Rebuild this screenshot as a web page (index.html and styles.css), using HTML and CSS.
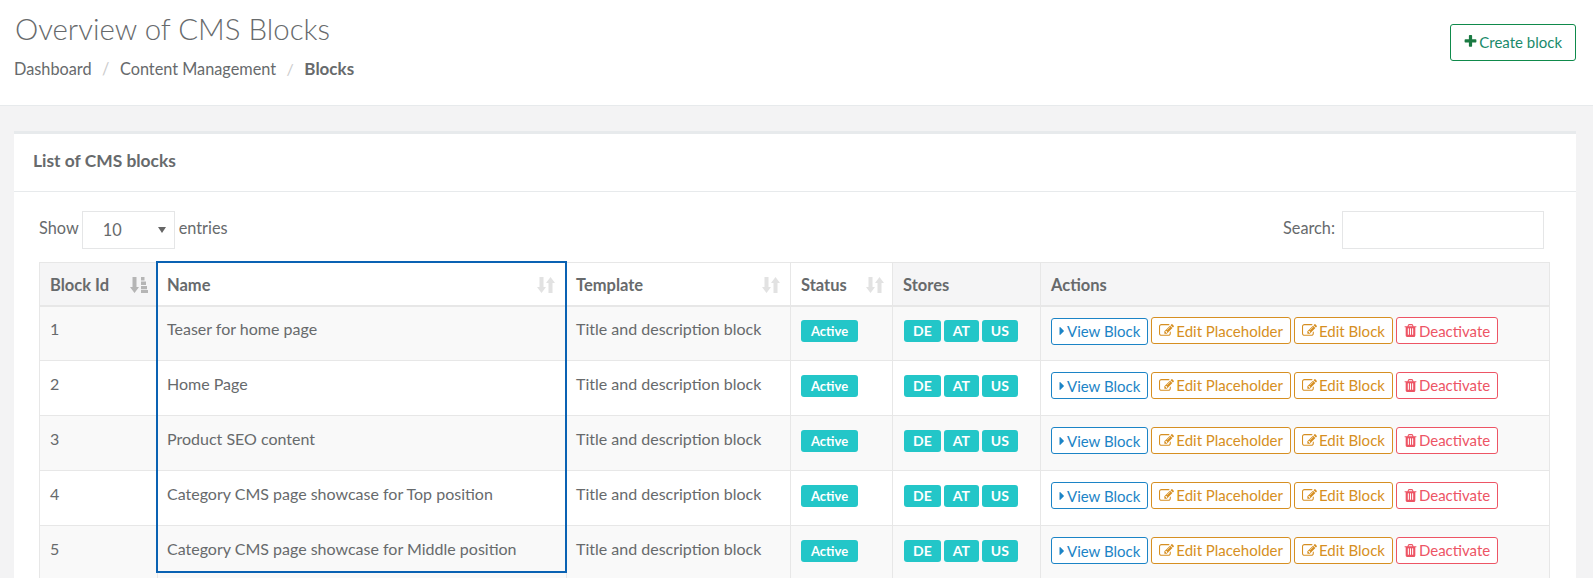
FILE: index.html
```html
<!DOCTYPE html>
<html lang="en">
<head>
    <meta charset="UTF-8">
    <title>Overview of CMS Blocks</title>
    <link rel="stylesheet" href="styles.css">
</head>
<body>
    <svg class="icon-defs" aria-hidden="true">
        <symbol id="i-plus" viewBox="0 0 1792 1792"><path d="M1600 736v192q0 40-28 68t-68 28h-416v416q0 40-28 68t-68 28h-192q-40 0-68-28t-28-68v-416h-416q-40 0-68-28t-28-68v-192q0-40 28-68t68-28h416v-416q0-40 28-68t68-28h192q40 0 68 28t28 68v416h416q40 0 68 28t28 68z"/></symbol>
        <symbol id="i-caret" viewBox="0 0 1792 1792"><path d="M1152 896q0 26-19 45l-448 448q-19 19-45 19t-45-19-19-45v-896q0-26 19-45t45-19 45 19l448 448q19 19 19 45z"/></symbol>
        <symbol id="i-edit" viewBox="0 0 1792 1792"><path d="M888 1184l116-116-152-152-116 116v56h96v96h56zm440-720q-16-16-33 1l-350 350q-17 17-1 33t33-1l350-350q17-17 1-33zm80 594v190q0 119-84.500 203.500t-203.500 84.500h-832q-119 0-203.500-84.500t-84.500-203.500v-832q0-119 84.500-203.500t203.500-84.500h832q63 0 117 25 15 7 18 23 3 17-9 29l-49 49q-14 14-32 8-23-6-45-6h-832q-66 0-113 47t-47 113v832q0 66 47 113t113 47h832q66 0 113-47t47-113v-126q0-13 9-22l64-64q15-15 35-7t20 29zm-96-738l288 288-672 672h-288v-288zm444 132l-92 92-288-288 92-92q28-28 68-28t68 28l152 152q28 28 28 68t-28 68z"/></symbol>
        <symbol id="i-trash" viewBox="0 0 1792 1792"><path d="M704 1376v-704q0-14-9-23t-23-9h-64q-14 0-23 9t-9 23v704q0 14 9 23t23 9h64q14 0 23-9t9-23zm256 0v-704q0-14-9-23t-23-9h-64q-14 0-23 9t-9 23v704q0 14 9 23t23 9h64q14 0 23-9t9-23zm256 0v-704q0-14-9-23t-23-9h-64q-14 0-23 9t-9 23v704q0 14 9 23t23 9h64q14 0 23-9t9-23zm-544-992h448l-48-117q-7-9-17-11h-317q-10 2-17 11zm928 32v64q0 14-9 23t-23 9h-96v948q0 83-47 143.500t-113 60.500h-832q-66 0-113-58.500t-47-141.500v-952h-96q-14 0-23-9t-9-23v-64q0-14 9-23t23-9h309l70-167q15-37 54-63t79-26h320q40 0 79 26t54 63l70 167h309q14 0 23 9t9 23z"/></symbol>
        <symbol id="i-sort" viewBox="0 0 18 18"><path d="M2.500 1h4v10H9l-4.500 6L0 11h2.500zM11.500 17h4V7H18l-4.500-6L9 7h2.500z"/></symbol>
        <symbol id="i-sort-asc" viewBox="0 0 18 18"><path d="M2.500 1h4v10H9l-4.500 6L0 11h2.500zM11 1h3.500v3.500H11zM11 5.500h5v3.500h-5zM11 10h6v3.200h-6zM11 14h7v3h-7z"/></symbol>
    </svg>

    <header class="page-head">
        <div>
            <h1>Overview of CMS Blocks</h1>
            <ol class="crumbs">
                <li>Dashboard</li>
                <li>Content Management</li>
                <li class="current">Blocks</li>
            </ol>
        </div>
        <a class="btn btn-create" href="#"><svg class="ico ico-plus"><use href="#i-plus"/></svg>Create block</a>
    </header>

    <main class="content">
        <section class="card">
            <h2 class="card-title">List of CMS blocks</h2>
            <div class="card-body">
                <div class="table-tools">
                    <label class="tool">Show
                        <span class="fake-select">10<i class="arrow"></i></span>
                        <span class="entries">entries</span></label>
                    <label class="tool">Search: <input class="search" type="search"></label>
                </div>

                <div class="table-wrap">
                    <div class="highlight"></div>
                    <table class="blocks">
                        <colgroup>
                            <col class="c-id"><col class="c-name"><col class="c-tpl"><col class="c-status"><col class="c-stores"><col>
                        </colgroup>
                        <thead>
                            <tr>
                                <th class="sorted">Block Id<svg class="sort"><use href="#i-sort-asc"/></svg></th>
                                <th class="sortable">Name<svg class="sort"><use href="#i-sort"/></svg></th>
                                <th class="sortable">Template<svg class="sort"><use href="#i-sort"/></svg></th>
                                <th class="sortable">Status<svg class="sort"><use href="#i-sort"/></svg></th>
                                <th>Stores</th>
                                <th>Actions</th>
                            </tr>
                        </thead>
                        <tbody>
                            <tr>
                                <td>1</td>
                                <td>Teaser for home page</td>
                                <td>Title and description block</td>
                                <td><span class="tag tag-status">Active</span></td>
                                <td class="tags"><span class="tag">DE</span><span class="tag">AT</span><span class="tag">US</span></td>
                                <td class="actions">
                                    <a class="btn btn-view" href="#"><svg class="ico ico-caret"><use href="#i-caret"/></svg>View Block</a>
                                    <a class="btn btn-edit" href="#"><svg class="ico"><use href="#i-edit"/></svg>Edit Placeholder</a>
                                    <a class="btn btn-edit" href="#"><svg class="ico"><use href="#i-edit"/></svg>Edit Block</a>
                                    <a class="btn btn-off" href="#"><svg class="ico ico-trash"><use href="#i-trash"/></svg>Deactivate</a>
                                </td>
                            </tr>
                            <tr>
                                <td>2</td>
                                <td>Home Page</td>
                                <td>Title and description block</td>
                                <td><span class="tag tag-status">Active</span></td>
                                <td class="tags"><span class="tag">DE</span><span class="tag">AT</span><span class="tag">US</span></td>
                                <td class="actions">
                                    <a class="btn btn-view" href="#"><svg class="ico ico-caret"><use href="#i-caret"/></svg>View Block</a>
                                    <a class="btn btn-edit" href="#"><svg class="ico"><use href="#i-edit"/></svg>Edit Placeholder</a>
                                    <a class="btn btn-edit" href="#"><svg class="ico"><use href="#i-edit"/></svg>Edit Block</a>
                                    <a class="btn btn-off" href="#"><svg class="ico ico-trash"><use href="#i-trash"/></svg>Deactivate</a>
                                </td>
                            </tr>
                            <tr>
                                <td>3</td>
                                <td>Product SEO content</td>
                                <td>Title and description block</td>
                                <td><span class="tag tag-status">Active</span></td>
                                <td class="tags"><span class="tag">DE</span><span class="tag">AT</span><span class="tag">US</span></td>
                                <td class="actions">
                                    <a class="btn btn-view" href="#"><svg class="ico ico-caret"><use href="#i-caret"/></svg>View Block</a>
                                    <a class="btn btn-edit" href="#"><svg class="ico"><use href="#i-edit"/></svg>Edit Placeholder</a>
                                    <a class="btn btn-edit" href="#"><svg class="ico"><use href="#i-edit"/></svg>Edit Block</a>
                                    <a class="btn btn-off" href="#"><svg class="ico ico-trash"><use href="#i-trash"/></svg>Deactivate</a>
                                </td>
                            </tr>
                            <tr>
                                <td>4</td>
                                <td>Category CMS page showcase for Top position</td>
                                <td>Title and description block</td>
                                <td><span class="tag tag-status">Active</span></td>
                                <td class="tags"><span class="tag">DE</span><span class="tag">AT</span><span class="tag">US</span></td>
                                <td class="actions">
                                    <a class="btn btn-view" href="#"><svg class="ico ico-caret"><use href="#i-caret"/></svg>View Block</a>
                                    <a class="btn btn-edit" href="#"><svg class="ico"><use href="#i-edit"/></svg>Edit Placeholder</a>
                                    <a class="btn btn-edit" href="#"><svg class="ico"><use href="#i-edit"/></svg>Edit Block</a>
                                    <a class="btn btn-off" href="#"><svg class="ico ico-trash"><use href="#i-trash"/></svg>Deactivate</a>
                                </td>
                            </tr>
                            <tr>
                                <td>5</td>
                                <td>Category CMS page showcase for Middle position</td>
                                <td>Title and description block</td>
                                <td><span class="tag tag-status">Active</span></td>
                                <td class="tags"><span class="tag">DE</span><span class="tag">AT</span><span class="tag">US</span></td>
                                <td class="actions">
                                    <a class="btn btn-view" href="#"><svg class="ico ico-caret"><use href="#i-caret"/></svg>View Block</a>
                                    <a class="btn btn-edit" href="#"><svg class="ico"><use href="#i-edit"/></svg>Edit Placeholder</a>
                                    <a class="btn btn-edit" href="#"><svg class="ico"><use href="#i-edit"/></svg>Edit Block</a>
                                    <a class="btn btn-off" href="#"><svg class="ico ico-trash"><use href="#i-trash"/></svg>Deactivate</a>
                                </td>
                            </tr>
                        </tbody>
                    </table>
                </div>
            </div>
        </section>
    </main>
</body>
</html>
```

FILE: styles.css
```css
html, body {
    height: 578px;
    overflow: hidden;
}
body {
    margin: 0;
    background: #f3f3f4;
    color: #676a6c;
    font-family: Lato, "Liberation Sans", sans-serif;
    font-size: 16px;
}
.icon-defs {
    display: none;
}
.page-head {
    display: flex;
    justify-content: space-between;
    align-items: flex-start;
    height: 106px;
    box-sizing: border-box;
    padding: 0 17px 0 15px;
    background: #fff;
    border-bottom: 1px solid #e7eaec;
}
h1 {
    margin: 9px 0 0;
    font-size: 29.400px;
    line-height: 40px;
    font-weight: 300;
}
.crumbs {
    display: flex;
    margin: 10px 0 0 -1px;
    padding: 0;
    list-style: none;
    font-size: 16.300px;
    line-height: 20px;
}
.crumbs li + li::before {
    content: "/";
    padding: 0 10.500px;
    color: #ccc;
}
.crumbs .current {
    font-size: 17px;
    font-weight: 700;
}
.crumbs .current::before {
    font-size: 16px;
    font-weight: 400;
}
.btn {
    display: inline-flex;
    align-items: center;
    height: 27px;
    box-sizing: border-box;
    padding: 0 7px;
    border: 1px solid;
    border-radius: 3px;
    background: #fff;
    font-size: 15px;
    text-decoration: none;
    white-space: nowrap;
}
.btn-create {
    height: 37px;
    margin-top: 24px;
    padding: 0 13px 2px 12px;
    color: #1a8a6b;
    border-color: #0f8a4b;
}
.btn-view {
    color: #1c84c6;
}
.btn-edit {
    color: #d68f22;
}
.btn-off {
    color: #ed5565;
}
.ico {
    width: 15px;
    height: 15px;
    margin-right: 2px;
    fill: currentColor;
    flex: none;
}
.ico-plus {
    margin-right: 1px;
    color: #1a7a42;
}
.ico-caret {
    width: 14px;
    height: 14px;
    margin: 0 -2px 0 -4px;
}
.ico-trash {
    margin: 0 1px 0 -1px;
}
.content {
    padding: 25px 17px 0 14px;
}
.card {
    background: #fff;
    border-top: 3px solid #e7eaec;
}
.card-title {
    margin: 0;
    height: 58px;
    box-sizing: border-box;
    padding: 0 19px;
    border-bottom: 1px solid #e7eaec;
    font-size: 17.400px;
    font-weight: 700;
    line-height: 54px;
}
.card-body {
    padding: 19px 26px 0 25px;
}
.table-tools {
    display: flex;
    justify-content: space-between;
    padding-right: 6px;
    margin-bottom: 13px;
}
.tool {
    display: flex;
    align-items: flex-start;
    gap: 3px;
    font-size: 16.300px;
    line-height: 34px;
}
.entries {
    margin-left: 1px;
}
.fake-select {
    display: flex;
    align-items: center;
    justify-content: space-between;
    width: 93px;
    height: 38px;
    box-sizing: border-box;
    padding: 0 8px 0 20px;
    border: 1px solid #e5e6e7;
}
.arrow {
    width: 0;
    height: 0;
    border: 4px solid transparent;
    border-top: 6px solid #666;
    border-bottom: 0;
}
.search {
    width: 202px;
    height: 38px;
    box-sizing: border-box;
    margin-left: 4px;
    border: 1px solid #e5e6e7;
    background: #fff;
}
.table-wrap {
    position: relative;
}
.blocks {
    width: 100%;
    table-layout: fixed;
    border-collapse: collapse;
    border: 1px solid #e7e7e7;
    font-size: 16px;
}
.c-id { width: 118px; }
.c-name { width: 409px; }
.c-tpl { width: 224px; }
.c-status { width: 102px; }
.c-stores { width: 148px; }
.blocks th, .blocks td {
    padding: 0 10px;
    border: 1px solid #e7e7e7;
    text-align: left;
}
.blocks th:nth-child(2), .blocks td:nth-child(2),
.blocks th:nth-child(3), .blocks td:nth-child(3) {
    padding-left: 9px;
}
.blocks th {
    position: relative;
    height: 40px;
    padding-top: 2px;
    background: #f5f5f6;
    border-bottom-width: 2px;
    font-size: 16.500px;
    font-weight: 700;
}
.blocks th.sortable {
    background: #fff;
}
.sort {
    position: absolute;
    right: 11px;
    top: 13px;
    width: 18px;
    height: 18px;
    fill: #e2e2e2;
}
.sorted .sort {
    right: 9px;
    fill: #b5b5b5;
}
.blocks th:nth-child(3) .sort {
    right: 10px;
}
.blocks th:nth-child(4) .sort {
    right: 8px;
}
.blocks td {
    height: 55px;
    vertical-align: top;
    padding-top: 14px;
    box-sizing: border-box;
    line-height: 18px;
}
.blocks tbody tr:first-child td {
    height: 54px;
    padding-top: 13px;
}
.blocks tbody tr:nth-child(odd) {
    background: #f9f9f9;
}
.tag {
    display: inline-block;
    vertical-align: top;
    height: 22px;
    padding: 0 9px;
    border-radius: 3px;
    background: #23c6c8;
    color: #fff;
    font-size: 14px;
    font-weight: 700;
    line-height: 22px;
}
.tag-status {
    padding: 0 10px;
    font-size: 13px;
}
.tags .tag + .tag {
    margin-left: 3px;
}
.blocks td.tags {
    padding-left: 11px;
}
.blocks td.actions {
    padding-top: 11px;
    white-space: nowrap;
    font-size: 0;
}
.blocks tbody tr:first-child td.actions {
    padding-top: 10px;
}
.actions .btn + .btn {
    margin-left: 3px;
}
.highlight {
    position: absolute;
    z-index: 1;
    left: 117px;
    top: -1px;
    width: 411px;
    height: 312px;
    box-sizing: border-box;
    border: 2px solid #0a62b3;
}
```
